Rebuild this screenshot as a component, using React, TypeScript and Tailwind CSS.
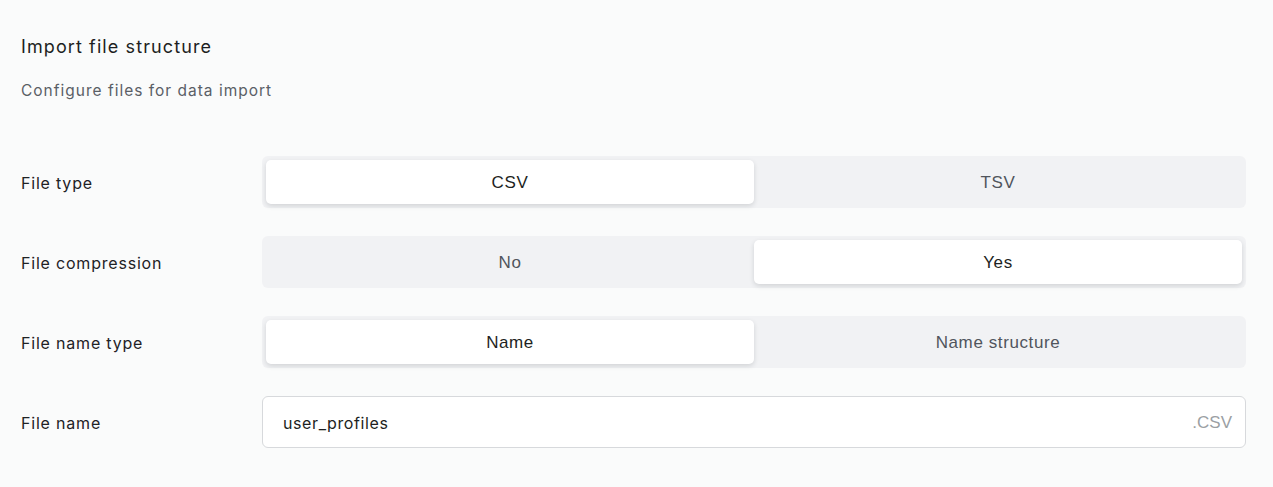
import React, { useState } from 'react'

type Option = { label: string; value: string }

const Segmented = ({
  options,
  value,
  onChange
}: {
  options: Option[]
  value: string
  onChange: (v: string) => void
}) => (
  <div className="flex h-[52px] flex-1 rounded-md bg-[#f1f2f4] p-1">
    {options.map(o => (
      <button
        key={o.value}
        type="button"
        onClick={() => onChange(o.value)}
        className={
          o.value === value
            ? 'flex-1 rounded-[5px] bg-white pt-[2px] text-[17px] tracking-[0.6px] text-[#1d1f22] shadow-[0_2px_5px_rgba(20,25,35,0.14)]'
            : 'flex-1 rounded-[5px] pt-[2px] text-[17px] tracking-[0.6px] text-[#50555c]'
        }
        style={{ fontFamily: '"Liberation Sans", Arial, sans-serif' }}
      >
        {o.label}
      </button>
    ))}
  </div>
)

const Row = ({ label, children }: { label: string; children: React.ReactNode }) => (
  <div className="flex items-center">
    <div className="w-[241px] pt-[2px] text-[16px] tracking-[0.8px] text-[#1f2226]">{label}</div>
    {children}
  </div>
)

export default function App() {
  const [fileType, setFileType] = useState('csv')
  const [compression, setCompression] = useState('yes')
  const [nameType, setNameType] = useState('name')
  const [fileName, setFileName] = useState('user_profiles')

  return (
    <div
      className="min-h-[487px] bg-[#fafbfb] pl-[21px] pr-[27px] pt-[35px]"
      style={{ fontFamily: 'Inter, "Noto Sans", sans-serif' }}
    >
      <h1 className="text-[18px] leading-6 tracking-[1.1px] text-[#1d1f22]">Import file structure</h1>
      <p className="mt-5 text-[15.5px] leading-6 tracking-[1px] text-[#5a5f66]">
        Configure files for data import
      </p>

      <div className="mt-[53px] flex flex-col gap-7">
        <Row label="File type">
          <Segmented
            options={[
              { label: 'CSV', value: 'csv' },
              { label: 'TSV', value: 'tsv' }
            ]}
            value={fileType}
            onChange={setFileType}
          />
        </Row>
        <Row label="File compression">
          <Segmented
            options={[
              { label: 'No', value: 'no' },
              { label: 'Yes', value: 'yes' }
            ]}
            value={compression}
            onChange={setCompression}
          />
        </Row>
        <Row label="File name type">
          <Segmented
            options={[
              { label: 'Name', value: 'name' },
              { label: 'Name structure', value: 'structure' }
            ]}
            value={nameType}
            onChange={setNameType}
          />
        </Row>
        <Row label="File name">
          <div className="flex h-[52px] flex-1 items-center rounded-md border border-[#d7d9dc] bg-white pl-5 pr-[13px] pt-[2px]">
            <input
              value={fileName}
              onChange={e => setFileName(e.target.value)}
              className="flex-1 bg-transparent text-[16px] tracking-[0.6px] text-[#1d1f22] outline-none"
            />
            <span
              className="text-[17px] text-[#9b9fa4]"
              style={{ fontFamily: '"Liberation Sans", Arial, sans-serif' }}
            >
              .CSV
            </span>
          </div>
        </Row>
      </div>
    </div>
  )
}
